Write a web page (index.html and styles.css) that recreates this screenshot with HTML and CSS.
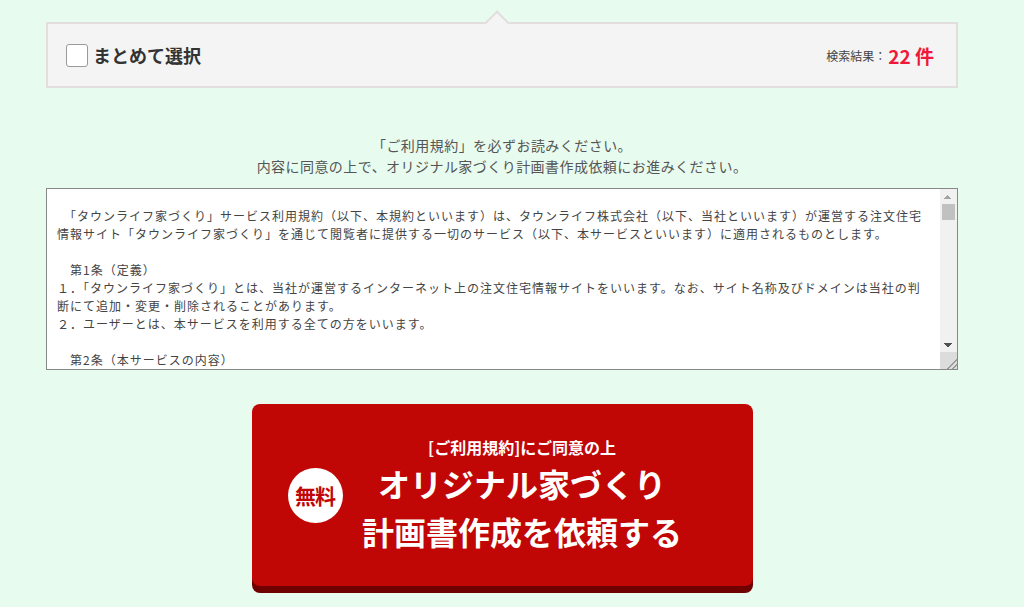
FILE: index.html
```html
<!DOCTYPE html>
<html lang="ja">

<head>
    <meta charset="UTF-8">
    <meta name="viewport" content="width=device-width, initial-scale=1.0">
    <title>計画書作成依頼</title>
    <link rel="stylesheet" href="styles.css">
</head>

<body>

    <div class="wrap">

        <div class="result-bar">
            <label class="select-all">
                <span class="check-box"></span>
                まとめて選択
            </label>
            <div class="result-count">
                検索結果：<span class="count-num">22 件</span>
            </div>
        </div>

        <p class="terms-lead">
            「ご利用規約」を必ずお読みください。<br>
            内容に同意の上で、オリジナル家づくり計画書作成依頼にお進みください。
        </p>

        <div class="terms-frame">
        <textarea class="terms-box" readonly>　「タウンライフ家づくり」サービス利用規約（以下、本規約といいます）は、タウンライフ株式会社（以下、当社といいます）が運営する注文住宅情報サイト「タウンライフ家づくり」を通じて閲覧者に提供する一切のサービス（以下、本サービスといいます）に適用されるものとします。

　第1条（定義）
１．「タウンライフ家づくり」とは、当社が運営するインターネット上の注文住宅情報サイトをいいます。なお、サイト名称及びドメインは当社の判断にて追加・変更・削除されることがあります。
２．ユーザーとは、本サービスを利用する全ての方をいいます。

　第2条（本サービスの内容）
１．本サービスは、ユーザーが入力した情報をもとに、当社と提携する住宅会社（以下、提携会社といいます）に対して、間取りプラン、資金計画、土地情報等の提案を依頼することができるサービスです。
２．本サービスの利用料金は無料とします。ただし、本サービスの利用に必要な通信費等はユーザーの負担とします。
３．提携会社からの提案内容については、各提携会社が責任を負うものとし、当社はその内容について一切保証しないものとします。

　第3条（規約の同意）
１．ユーザーは、本規約に同意した上で本サービスを利用するものとします。
２．ユーザーが本サービスを利用した時点で、本規約の全ての内容に同意したものとみなします。

　第4条（規約の変更）
１．当社は、ユーザーの承諾を得ることなく、本規約を随時変更することができるものとします。
２．変更後の本規約は、当社が別途定める場合を除き、本サイト上に掲示した時点より効力を生じるものとします。

　第5条（個人情報の取扱い）
１．当社は、ユーザーが入力した個人情報を、当社が別途定める「個人情報保護方針」に従い適切に取り扱うものとします。
２．ユーザーは、本サービスの提供に必要な範囲で、入力した個人情報が提携会社に提供されることに同意するものとします。

　第6条（禁止事項）
ユーザーは、本サービスの利用にあたり、以下の行為を行ってはならないものとします。
１．虚偽の情報を入力する行為
２．他人の個人情報を無断で入力する行為
３．当社、提携会社または第三者の権利を侵害する行為
４．本サービスの運営を妨げる行為
５．法令または公序良俗に反する行為
６．その他、当社が不適切と判断する行為

　第7条（免責事項）
１．当社は、本サービスの内容、提携会社からの提案内容及び提携会社との契約について、一切の責任を負わないものとします。
２．当社は、本サービスの中断、停止、変更等によりユーザーに生じた損害について、一切の責任を負わないものとします。

附則
本規約は、公開日より施行します。</textarea>
            <div class="scroll-rail">
                <span class="scroll-btn scroll-up"></span>
                <span class="scroll-track"><span class="scroll-thumb"></span></span>
                <span class="scroll-btn scroll-down"></span>
                <span class="resize-grip"></span>
            </div>
        </div>

        <div class="submit-area">
            <button type="button" class="submit-btn">
                <span class="free-badge">無料</span>
                <span class="btn-sub">[ご利用規約]にご同意の上</span>
                <span class="btn-main">オリジナル家づくり<br>計画書作成を依頼する</span>
            </button>
        </div>

    </div>

</body>

</html>
```

FILE: styles.css
```css
body {
    margin: 0;
    background-color: #e8fbef;
    font-family: "Noto Sans CJK JP", "Noto Sans", sans-serif;
    color: #333;
}

.wrap {
    width: 912px;
    margin-left: 46px;
    padding-top: 22px;
}

/* search result bar with notch */
.result-bar {
    position: relative;
    height: 62px;
    display: flex;
    align-items: center;
    justify-content: space-between;
    padding: 0 22px 0 18px;
    background-color: #f4f4f4;
    border: 2px solid #e2dede;
}

.result-bar::before {
    content: "";
    position: absolute;
    top: -10px;
    left: 50%;
    margin-left: -14px;
    width: 16px;
    height: 16px;
    background-color: #f4f4f4;
    border-top: 2px solid #e2dede;
    border-left: 2px solid #e2dede;
    transform: rotate(45deg);
}

.select-all {
    display: flex;
    align-items: center;
    gap: 5px;
    font-size: 18px;
    font-weight: bold;
    color: #333;
    cursor: pointer;
}

.check-box {
    width: 20px;
    height: 21px;
    background-color: white;
    border: 1px solid #9a9a9a;
    border-radius: 3px;
}

.result-count {
    font-size: 12px;
    color: #444;
    display: flex;
    align-items: center;
}

.count-num {
    font-size: 19px;
    font-weight: bold;
    color: #f01838;
    margin-left: 2px;
}

/* terms */
.terms-lead {
    margin: 47px 0 11px;
    text-align: center;
    font-size: 14px;
    line-height: 21px;
    letter-spacing: 0.45px;
    color: #555;
}

.terms-frame {
    display: flex;
    height: 180px;
    border: 1px solid #888;
    background-color: white;
}

.terms-box {
    flex: 1;
    box-sizing: border-box;
    height: 180px;
    margin: 0;
    padding: 18px 12px 0 10px;
    border: none;
    background-color: white;
    font-family: "Noto Sans CJK JP", sans-serif;
    font-size: 12px;
    line-height: 18px;
    letter-spacing: 1px;
    color: #444;
    overflow: hidden;
    resize: none;
    outline: none;
}

/* drawn scrollbar (headless shot hides the real one) */
.scroll-rail {
    width: 17px;
    display: flex;
    flex-direction: column;
    background-color: #f1f1f1;
}

.scroll-btn {
    height: 15px;
    background-repeat: no-repeat;
    background-size: 4px 4px;
}

.scroll-up {
    background-image:
        linear-gradient(to bottom right, transparent 50%, #a3a3a3 50%),
        linear-gradient(to bottom left, transparent 50%, #a3a3a3 50%);
    background-position: 4px 6px, 8px 6px;
}

.scroll-down {
    background-image:
        linear-gradient(to top right, transparent 50%, #505050 50%),
        linear-gradient(to top left, transparent 50%, #505050 50%);
    background-position: 4px 6px, 8px 6px;
}

.scroll-track {
    flex: 1;
    padding: 0 2px;
}

.scroll-thumb {
    display: block;
    height: 16px;
    background-color: #c1c1c1;
}

.resize-grip {
    height: 17px;
    background-color: #dcdcdc;
    background-image:
        linear-gradient(135deg, transparent 68%, #9a9a9a 68%, #9a9a9a 74%, transparent 74%, transparent 84%, #9a9a9a 84%, #9a9a9a 90%, transparent 90%);
}

/* submit button */
.submit-area {
    padding: 34px 0 20px;
}

.submit-btn {
    position: relative;
    display: flex;
    flex-direction: column;
    align-items: center;
    justify-content: center;
    width: 501px;
    height: 182px;
    margin: 0 auto;
    padding: 0 0 0 40px;
    border: none;
    border-radius: 8px;
    background-color: #c10606;
    box-shadow: 0 7px 0 #6e0000;
    color: white;
    font-family: "Noto Sans CJK JP", sans-serif;
    font-weight: bold;
    cursor: pointer;
}

.free-badge {
    position: absolute;
    left: 36px;
    top: 50%;
    margin-top: -27px;
    width: 55px;
    height: 55px;
    border-radius: 50%;
    background-color: white;
    color: #c10606;
    font-size: 21px;
    line-height: 55px;
    text-align: center;
    letter-spacing: -1px;
}

.btn-sub {
    font-size: 16px;
    line-height: 22px;
    margin-bottom: 1px;
}

.btn-main {
    font-size: 32px;
    line-height: 48px;
    text-align: center;
}
```
